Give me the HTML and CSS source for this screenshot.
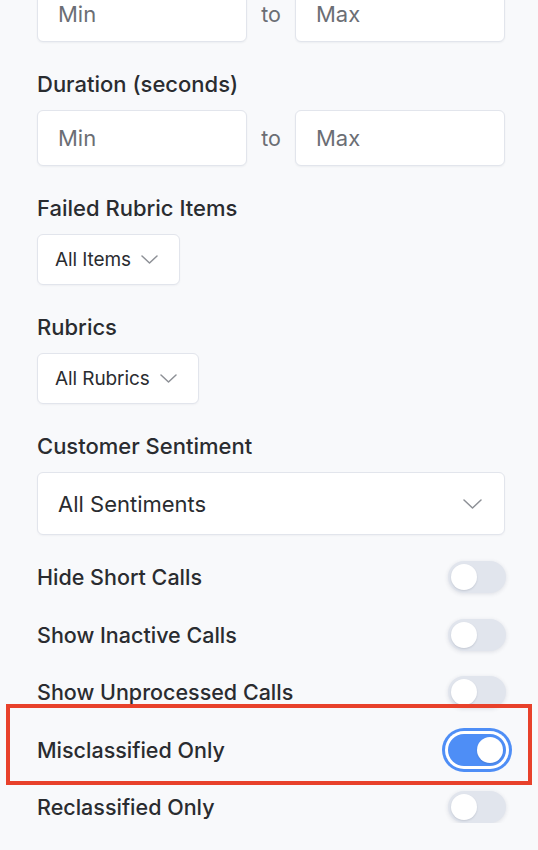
FILE: index.html
```html
<!DOCTYPE html>
<html lang="en">

<head>
    <meta charset="UTF-8" />
    <meta name="viewport" content="width=device-width, initial-scale=1" />
    <title>Call Filters</title>
    <link rel="stylesheet" href="styles.css">
</head>

<body>
    <div class="filters">
        <!-- Range row scrolled partly out of view -->
        <div class="field field-first">
            <div class="range">
                <input class="text-input" type="text" placeholder="Min" />
                <span class="range-to">to</span>
                <input class="text-input" type="text" placeholder="Max" />
            </div>
        </div>

        <div class="field">
            <div class="field-label">Duration (seconds)</div>
            <div class="range">
                <input class="text-input" type="text" placeholder="Min" />
                <span class="range-to">to</span>
                <input class="text-input" type="text" placeholder="Max" />
            </div>
        </div>

        <div class="field">
            <div class="field-label">Failed Rubric Items</div>
            <button class="dropdown" type="button">
                All Items
                <svg class="chevron" width="17" height="9" viewBox="0 0 17 9"><path d="M1 1l7.5 7 7.5-7" /></svg>
            </button>
        </div>

        <div class="field">
            <div class="field-label">Rubrics</div>
            <button class="dropdown" type="button">
                All Rubrics
                <svg class="chevron" width="17" height="9" viewBox="0 0 17 9"><path d="M1 1l7.5 7 7.5-7" /></svg>
            </button>
        </div>

        <div class="field">
            <div class="field-label">Customer Sentiment</div>
            <button class="select" type="button">
                All Sentiments
                <svg class="chevron" width="19" height="10" viewBox="0 0 19 10"><path d="M1 1l8.5 8 8.5-8" /></svg>
            </button>
        </div>

        <div class="toggles">
            <div class="toggle-row">
                <span>Hide Short Calls</span>
                <button class="switch" type="button" role="switch" aria-checked="false"><span class="knob"></span></button>
            </div>
            <div class="toggle-row">
                <span>Show Inactive Calls</span>
                <button class="switch" type="button" role="switch" aria-checked="false"><span class="knob"></span></button>
            </div>
            <div class="toggle-row">
                <span>Show Unprocessed Calls</span>
                <button class="switch" type="button" role="switch" aria-checked="false"><span class="knob"></span></button>
            </div>
            <div class="toggle-row highlighted">
                <span>Misclassified Only</span>
                <button class="switch on" type="button" role="switch" aria-checked="true"><span class="knob"></span></button>
            </div>
            <div class="toggle-row">
                <span>Reclassified Only</span>
                <button class="switch" type="button" role="switch" aria-checked="false"><span class="knob"></span></button>
            </div>
        </div>
    </div>
</body>

</html>
```

FILE: styles.css
```css
body {
    margin: 0;
    padding: 0;
    font-family: Inter, "Noto Sans", sans-serif;
    background-color: #f8f9fb;
    color: #2a2c30;
    overflow: hidden;
}

.filters {
    padding: 0 33px 0 37px;
}

.field {
    margin-bottom: 28px;
}

.field-first {
    margin-top: -14px;
}

.field-label {
    font-size: 22px;
    font-weight: 500;
    line-height: 28px;
    margin-bottom: 12px;
}

.range {
    display: flex;
    align-items: center;
    gap: 14px;
}

.range-to {
    width: 20px;
    font-size: 21.5px;
    color: #6b6e74;
    text-align: center;
}

.text-input {
    flex: 1;
    min-width: 0;
    height: 56px;
    box-sizing: border-box;
    padding: 0 20px;
    border: 1px solid #e2e5ec;
    border-radius: 6px;
    background: #fff;
    box-shadow: 0 1px 2px rgba(20, 30, 60, 0.05);
    font-family: inherit;
    font-size: 22px;
    color: #2a2c30;
    outline: none;
}

.text-input::placeholder {
    color: #6b6e74;
}

.dropdown,
.select {
    display: flex;
    align-items: center;
    box-sizing: border-box;
    border: 1px solid #e2e5ec;
    border-radius: 6px;
    background: #fff;
    box-shadow: 0 1px 2px rgba(20, 30, 60, 0.04);
    font-family: inherit;
    color: #2a2c30;
    cursor: pointer;
}

.dropdown {
    height: 51px;
    padding: 0 21px 0 17px;
    gap: 10px;
    font-size: 19px;
    letter-spacing: -0.1px;
}

.select {
    width: 100%;
    height: 63px;
    padding: 0 22px 0 20px;
    justify-content: space-between;
    font-size: 22px;
}

.chevron path {
    fill: none;
    stroke: #8d9096;
    stroke-width: 1.5;
    stroke-linecap: round;
    stroke-linejoin: round;
}

.toggles {
    display: flex;
    flex-direction: column;
    gap: 25.5px;
    margin-top: -2px;
}

.toggle-row {
    position: relative;
    display: flex;
    align-items: center;
    justify-content: space-between;
    height: 32px;
    font-size: 21.5px;
    font-weight: 500;
}

/* annotation box drawn over the row */
.toggle-row.highlighted::after {
    content: "";
    position: absolute;
    top: -30px;
    bottom: -19px;
    left: -31px;
    right: -27px;
    border: 4px solid #e8412b;
    pointer-events: none;
}

.switch {
    position: relative;
    width: 58px;
    height: 32px;
    margin-right: -1px;
    padding: 0;
    border: none;
    border-radius: 16px;
    background: #e1e5ed;
    box-shadow: 0 1px 4px rgba(30, 40, 70, 0.12);
    cursor: pointer;
}

.knob {
    position: absolute;
    top: 3px;
    left: 3px;
    width: 26px;
    height: 26px;
    border-radius: 50%;
    background: #fff;
    box-shadow: 0 1px 2px rgba(30, 40, 70, 0.15);
}

.switch.on {
    background: #4e8ef6;
    box-shadow: 0 0 0 3px #fff, 0 0 0 6px #4e8ef6;
}

.switch.on .knob {
    left: 29px;
}
```
